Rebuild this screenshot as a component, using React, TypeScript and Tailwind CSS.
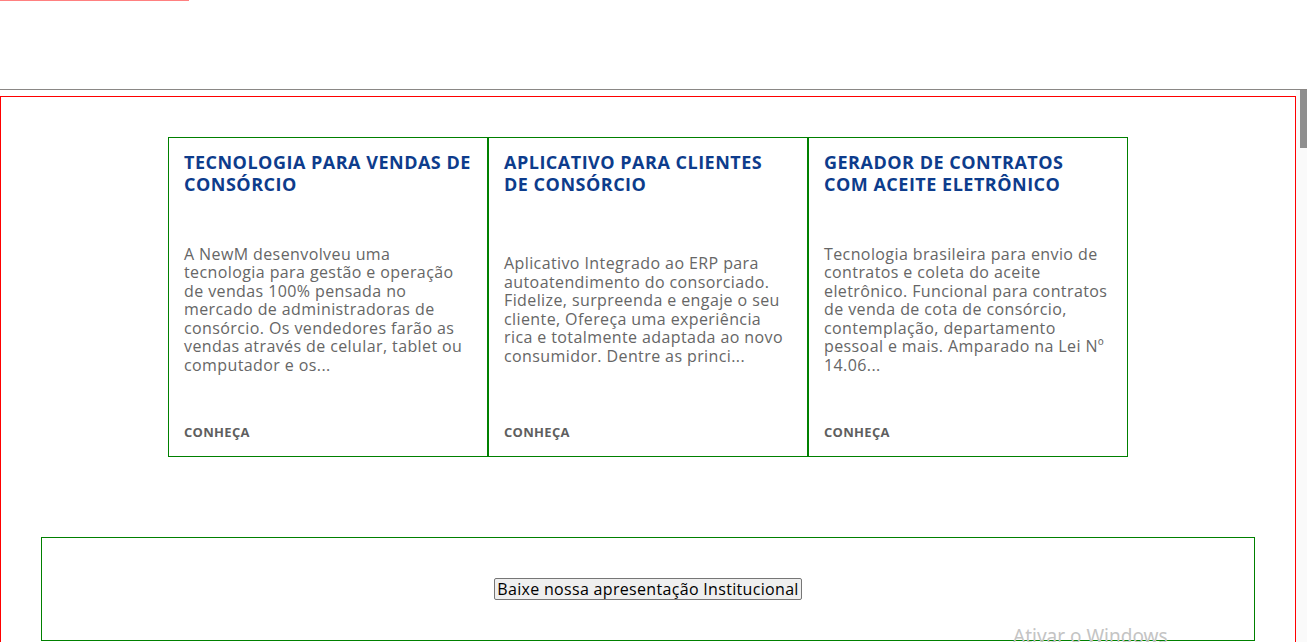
const cards = [
  {
    title: ['TECNOLOGIA PARA VENDAS DE', 'CONSÓRCIO'],
    text: 'A NewM desenvolveu uma tecnologia para gestão e operação de vendas 100% pensada no mercado de administradoras de consórcio. Os vendedores farão as vendas através de celular, tablet ou computador e os...',
  },
  {
    title: ['APLICATIVO PARA CLIENTES', 'DE CONSÓRCIO'],
    text: 'Aplicativo Integrado ao ERP para autoatendimento do consorciado. Fidelize, surpreenda e engaje o seu cliente, Ofereça uma experiência rica e totalmente adaptada ao novo consumidor. Dentre as princi...',
  },
  {
    title: ['GERADOR DE CONTRATOS', 'COM ACEITE ELETRÔNICO'],
    text: 'Tecnologia brasileira para envio de contratos e coleta do aceite eletrônico. Funcional para contratos de venda de cota de consórcio, contemplação, departamento pessoal e mais. Amparado na Lei Nº 14.06...',
  },
];

export default function App() {
  return (
    <div className="relative h-[642px] overflow-hidden bg-white font-['Open_Sans',sans-serif]">
      {/* header strip */}
      <div className="h-[90px] border-b border-[#8a8785]">
        <div className="h-px w-[189px] bg-[#ff8080]" />
      </div>

      <div className="flex">
        <main className="flex-1 pt-[6px]">
          <div className="border border-[#ff0000] pt-10 pb-20">
            <div className="flex justify-center">
              {cards.map((card) => (
                <Card key={card.title[0]} title={card.title} text={card.text} />
              ))}
            </div>

            <div className="mx-10 mt-20 flex h-[104px] items-start justify-center border border-[#008000] pt-10">
              <button className="h-[22px] rounded-[2px] border border-[#767676] bg-[#efefef] px-[2px] text-[16px] leading-[20px] tracking-[0.32px] text-black">
                Baixe nossa apresentação Institucional
              </button>
            </div>
          </div>
        </main>

        {/* scrollbar */}
        <div className="w-[11px] bg-[#fafafa]">
          <div className="ml-auto h-[58px] w-[7px] bg-[#8f8f8f]" />
        </div>
      </div>

      <div className="absolute left-[1013px] top-[622px] font-['Noto_Sans',sans-serif] text-[19px] text-[#c4c4c4]">
        Ativar o Windows
      </div>
    </div>
  );
}

interface CardProps {
  title: string[];
  text: string;
}

function Card({ title, text }: CardProps) {
  return (
    <div className="flex h-[320px] w-[320px] flex-col border border-[#008000] px-[15px] pt-[13px] pb-[16px]">
      <h3 className="text-[18px] font-bold leading-[22px] tracking-[0.5px] whitespace-nowrap text-[#0d3c8c]">
        {title[0]}
        <br />
        {title[1]}
      </h3>
      <div className="flex flex-1 items-center">
        <p className="text-[16px] leading-[18.5px] tracking-[0.4px] text-[#666666]">{text}</p>
      </div>
      <span className="text-[13px] font-bold leading-4 tracking-[0.3px] text-[#5f5f5f]">CONHEÇA</span>
    </div>
  );
}
